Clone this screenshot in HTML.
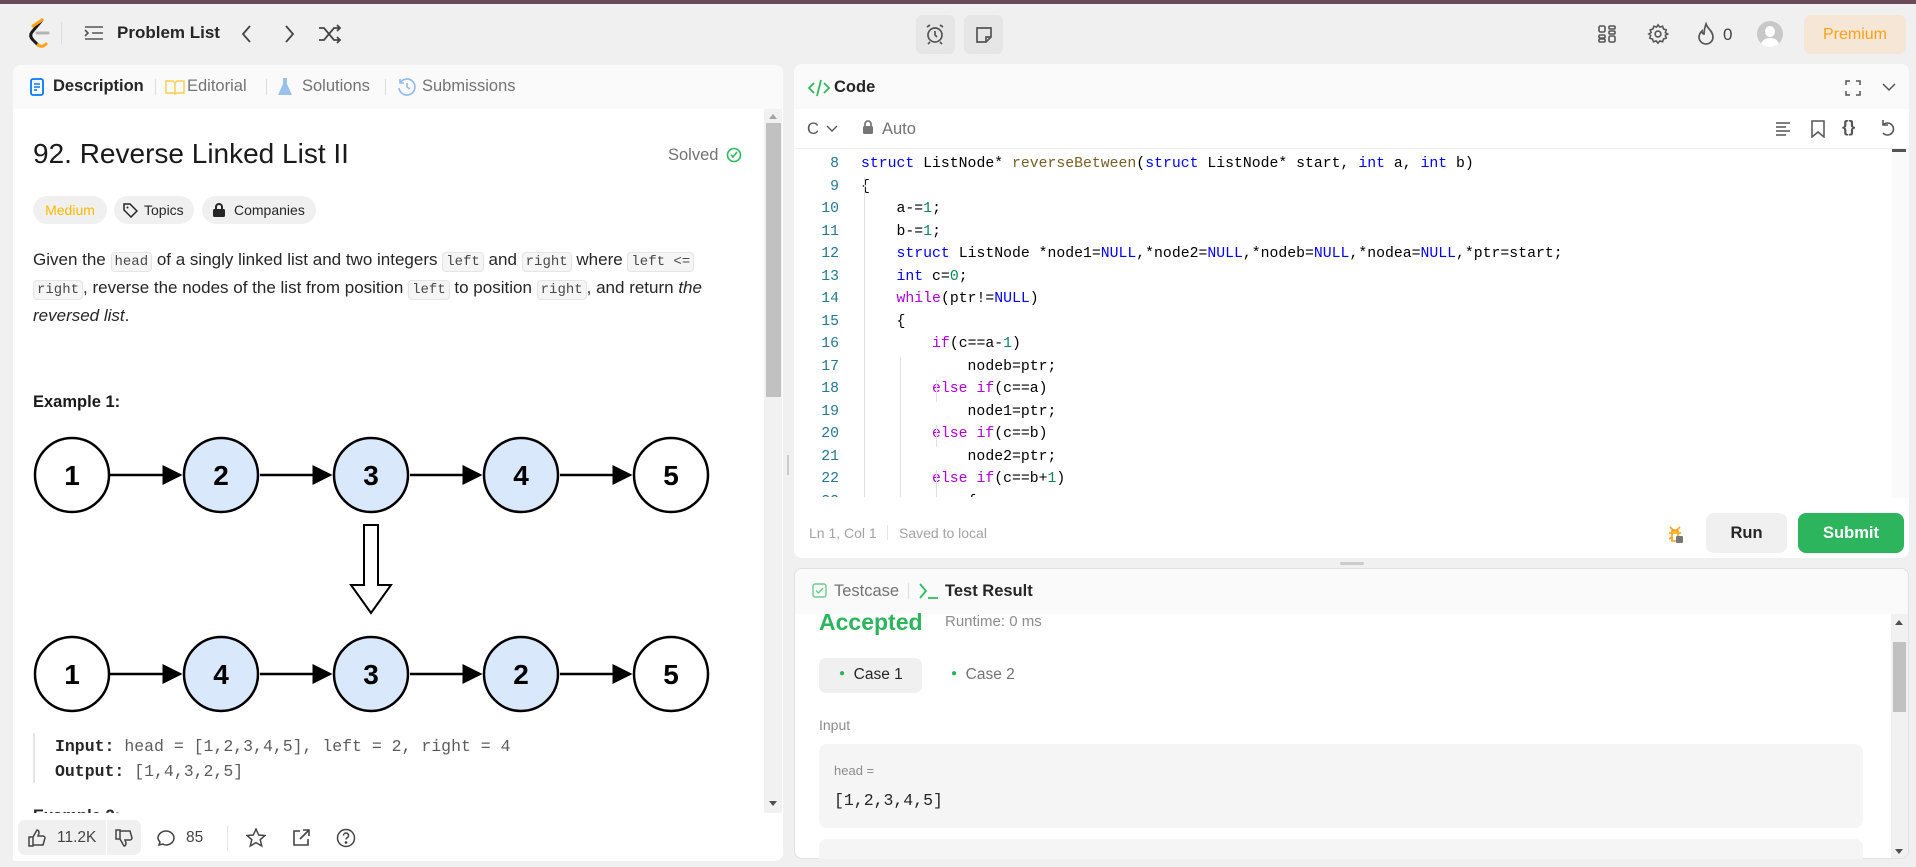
<!DOCTYPE html>
<html><head><meta charset="utf-8"><style>
*{box-sizing:border-box;margin:0;padding:0}
body{width:1916px;height:867px;background:#f0f0f0;font-family:"Liberation Sans",sans-serif;position:relative;overflow:hidden;color:#262626}
.a{position:absolute}
.topbar{left:0;top:0;width:1916px;height:4px;background:#6b4a5a}
.panel{background:#fff;border-radius:8px;overflow:hidden}
.mono{font-family:"Liberation Mono",monospace}
code.i{font-family:"Liberation Mono",monospace;font-size:14px;background:#f5f5f5;border:1px solid #e5e5e5;border-radius:4px;padding:1px 3px;color:#4a4a4a}
.code div{height:22.5px;line-height:22.5px;white-space:pre}
.k{color:#0000ff}.f{color:#795e26}.c{color:#af00db}.n{color:#098658}
.ln{color:#237893;text-align:right;width:40px;display:inline-block;margin-right:22px}
.tab{font-size:16.5px;color:#737373;top:77px}
</style></head><body>
<div class="a topbar"></div>
<!-- nav -->
<svg class="a" style="left:28px;top:18px" width="24" height="30" viewBox="0 0 24 30"><path d="M14 2 L4 14 Q1 18 5 22 L10 27" stroke="#1a1a1a" stroke-width="3" fill="none" stroke-linecap="round"/><path d="M10 27 Q14 30 18 26" stroke="#ffa116" stroke-width="3" fill="none" stroke-linecap="round"/><path d="M9 15 H20" stroke="#b3b3b3" stroke-width="3" stroke-linecap="round"/><path d="M5 8 L14 2" stroke="#ffa116" stroke-width="3" stroke-linecap="round"/></svg>
<div class="a" style="left:61px;top:22px;width:1px;height:22px;background:#ddd"></div>
<svg class="a" style="left:84px;top:25px" width="20" height="16" viewBox="0 0 20 16" stroke="#555" stroke-width="1.6" fill="none"><path d="M1 2h18M8 8h11M1 14h18M1 5l3 3-3 3"/></svg>
<div class="a" style="left:117px;top:23px;font-size:17px;font-weight:600;color:#262626">Problem List</div>
<svg class="a" style="left:240px;top:24px" width="14" height="20"><path d="M10 2 L3 10 L10 18" stroke="#444" stroke-width="1.8" fill="none"/></svg>
<svg class="a" style="left:282px;top:24px" width="14" height="20"><path d="M4 2 L11 10 L4 18" stroke="#444" stroke-width="1.8" fill="none"/></svg>
<svg class="a" style="left:318px;top:24px" width="24" height="20" viewBox="0 0 24 20" stroke="#444" stroke-width="1.8" fill="none"><path d="M1 4h5l10 12h6M1 16h5l10-12h6M19 1l3 3-3 3M19 13l3 3-3 3"/></svg>
<div class="a" style="left:916px;top:15px;width:39px;height:39px;background:#e6e6e6;border-radius:6px"></div>
<svg class="a" style="left:924px;top:23px" width="22" height="22" viewBox="0 0 22 22" stroke="#555" stroke-width="1.7" fill="none"><circle cx="11" cy="12" r="7"/><path d="M11 8v4l2 2M3 4l3-2M19 4l-3-2M6 19l-2 2M16 19l2 2"/></svg>
<div class="a" style="left:964px;top:15px;width:39px;height:39px;background:#e6e6e6;border-radius:6px"></div>
<svg class="a" style="left:974px;top:25px" width="20" height="20" viewBox="0 0 20 20" stroke="#555" stroke-width="1.7" fill="none"><path d="M3 3h14v9l-5 5H3z M12 17v-5h5"/></svg>
<svg class="a" style="left:1597px;top:24px" width="20" height="20" viewBox="0 0 20 20" stroke="#555" stroke-width="1.6" fill="none"><rect x="2" y="2" width="6" height="6" rx="1.5"/><rect x="2" y="11" width="6" height="3" rx="1"/><rect x="2" y="15" width="6" height="3" rx="1"/><rect x="12" y="2" width="6" height="3" rx="1"/><rect x="12" y="7" width="6" height="3" rx="1"/><rect x="12" y="12" width="6" height="6" rx="1.5"/></svg>
<svg class="a" style="left:1647px;top:23px" width="22" height="22" viewBox="0 0 24 24" stroke="#555" stroke-width="1.7" fill="none"><circle cx="12" cy="12" r="3.2"/><path d="M12 2l2 2.5 3-1 1 3 3 1-1 3 2.5 1.5-2.5 1.5 1 3-3 1-1 3-3-1-2 2.5-2-2.5-3 1-1-3-3-1 1-3L2 12l2.5-1.5-1-3 3-1 1-3 3 1z"/></svg>
<svg class="a" style="left:1696px;top:22px" width="20" height="24" viewBox="0 0 20 24" stroke="#555" stroke-width="1.7" fill="none"><path d="M10 2c1 4 7 7 7 13a7 7 0 0 1-14 0c0-3 2-5 3-6 0 2 1 3 2 3 0-4 1-7 2-10z"/></svg>
<div class="a" style="left:1723px;top:25px;font-size:17px;color:#444">0</div>
<div class="a" style="left:1757px;top:21px;width:26px;height:26px;border-radius:50%;background:#c8c8c8;overflow:hidden"><div class="a" style="left:8px;top:5px;width:10px;height:11px;border-radius:50%;background:#fff"></div><div class="a" style="left:4px;top:17px;width:18px;height:14px;border-radius:50%;background:#fff"></div></div>
<div class="a" style="left:1804px;top:15px;width:102px;height:39px;background:#f5e6d5;border-radius:7px;color:#ffa116;font-size:16px;text-align:center;line-height:39px">Premium</div>

<!-- left panel -->
<div class="a panel" style="left:13px;top:65px;width:770px;height:796px">
 <div class="a" style="left:0;top:0;width:770px;height:44px;background:#fafafa"></div>
 <div class="a" style="left:751px;top:44px;width:18px;height:704px;background:#f1f1f1"></div>
 <div class="a" style="left:753px;top:58px;width:15px;height:274px;background:#c1c1c1"></div>
 <div class="a" style="left:756px;top:49px;border:4px solid transparent;border-bottom:5px solid #a3a3a3;border-top:0"></div>
 <div class="a" style="left:756px;top:736px;border:4px solid transparent;border-top:5px solid #505050;border-bottom:0"></div>
</div>
<svg class="a" style="left:30px;top:78px" width="14" height="18" viewBox="0 0 14 18"><rect x="1" y="1" width="12" height="16" rx="2" fill="none" stroke="#007bff" stroke-width="1.8"/><path d="M4 6h6M4 9h6M4 12h3" stroke="#007bff" stroke-width="1.6"/></svg>
<div class="a tab" style="left:53px;color:#262626;font-weight:600">Description</div>
<div class="a" style="left:155px;top:79px;width:1px;height:16px;background:#ddd"></div>
<svg class="a" style="left:165px;top:79px" width="20" height="16"><path d="M1 2h7l2 2 2-2h7v12h-7l-2 1-2-1H1z M10 4v11" stroke="#ffb800" stroke-width="1.4" fill="none" opacity=".7"/></svg>
<div class="a tab" style="left:187px">Editorial</div>
<div class="a" style="left:266px;top:79px;width:1px;height:16px;background:#ddd"></div>
<svg class="a" style="left:277px;top:77px" width="16" height="20"><path d="M5 1h6M6 1v6L1 18h14L10 7V1" fill="#4a90e2" opacity=".55"/></svg>
<div class="a tab" style="left:302px">Solutions</div>
<div class="a" style="left:385px;top:79px;width:1px;height:16px;background:#ddd"></div>
<svg class="a" style="left:397px;top:77px" width="20" height="20" viewBox="0 0 20 20"><path d="M3 6a8 8 0 1 1-1 5M3 2v4h4M10 6v4l3 2" stroke="#4a90e2" stroke-width="1.6" fill="none" opacity=".6"/></svg>
<div class="a tab" style="left:422px">Submissions</div>

<div class="a" style="left:33px;top:138px;font-size:28px;font-weight:500;color:#1a1a1a">92. Reverse Linked List II</div>
<div class="a" style="left:668px;top:146px;font-size:16.5px;color:#737373">Solved</div>
<svg class="a" style="left:726px;top:146px" width="16" height="18"><circle cx="8" cy="9" r="6.5" stroke="#2cbb5d" stroke-width="1.6" fill="none"/><path d="M5 9l2 2 4-5" stroke="#2cbb5d" stroke-width="1.6" fill="none"/></svg>
<div class="a" style="left:33px;top:196px;width:74px;height:28px;border-radius:14px;background:#f0f0f0;color:#ffb800;font-size:14px;line-height:28px;text-align:center">Medium</div>
<div class="a" style="left:114px;top:196px;width:80px;height:28px;border-radius:14px;background:#f0f0f0;font-size:14px;line-height:28px;padding-left:30px">Topics</div>
<svg class="a" style="left:122px;top:202px" width="16" height="16"><path d="M2 2h6l7 7-6 6-7-7z" stroke="#262626" stroke-width="1.5" fill="none"/><circle cx="5.5" cy="5.5" r="1" fill="#262626"/></svg>
<div class="a" style="left:202px;top:196px;width:114px;height:28px;border-radius:14px;background:#f0f0f0;font-size:14px;line-height:28px;padding-left:32px">Companies</div>
<svg class="a" style="left:212px;top:202px" width="14" height="16"><rect x="1" y="7" width="12" height="8" rx="1.5" fill="#262626"/><path d="M4 7V5a3 3 0 0 1 6 0v2" stroke="#262626" stroke-width="2" fill="none"/></svg>
<div class="a" style="left:33px;top:247px;width:710px;font-size:17px;line-height:25px;color:#262626">Given the <code class="i">head</code> of a singly linked list and two integers <code class="i">left</code> and <code class="i">right</code> where <code class="i">left &lt;=</code> <code class="i">right</code>, reverse the nodes of the list from position <code class="i">left</code> to position <code class="i">right</code>, and return <i>the reversed list</i>.</div>
<div class="a" style="left:33px;top:393px;font-size:16.5px;font-weight:700;color:#1a1a1a">Example 1:</div>
<svg class="a" style="left:25px;top:430px" width="700" height="290" viewBox="25 430 700 290" font-family="Liberation Sans" font-weight="700" font-size="28" text-anchor="middle">
 <defs><marker id="ar" markerWidth="8" markerHeight="8" refX="7" refY="4" orient="auto"><path d="M0 0L8 4L0 8z" fill="#000"/></marker></defs>
 <g stroke="#000" stroke-width="2.5">
 <line x1="110" y1="475" x2="180" y2="475" marker-end="url(#ar)"/><line x1="260" y1="475" x2="330" y2="475" marker-end="url(#ar)"/><line x1="410" y1="475" x2="480" y2="475" marker-end="url(#ar)"/><line x1="560" y1="475" x2="630" y2="475" marker-end="url(#ar)"/>
 <line x1="110" y1="674" x2="180" y2="674" marker-end="url(#ar)"/><line x1="260" y1="674" x2="330" y2="674" marker-end="url(#ar)"/><line x1="410" y1="674" x2="480" y2="674" marker-end="url(#ar)"/><line x1="560" y1="674" x2="630" y2="674" marker-end="url(#ar)"/>
 <circle cx="72" cy="475" r="37" fill="#fff"/><circle cx="221" cy="475" r="37" fill="#dae8fc"/><circle cx="371" cy="475" r="37" fill="#dae8fc"/><circle cx="521" cy="475" r="37" fill="#dae8fc"/><circle cx="671" cy="475" r="37" fill="#fff"/>
 <circle cx="72" cy="674" r="37" fill="#fff"/><circle cx="221" cy="674" r="37" fill="#dae8fc"/><circle cx="371" cy="674" r="37" fill="#dae8fc"/><circle cx="521" cy="674" r="37" fill="#dae8fc"/><circle cx="671" cy="674" r="37" fill="#fff"/>
 <path d="M364 525h14v60h13l-20 28-20-28h13z" fill="#fff" stroke-width="2"/>
 </g>
 <g fill="#000"><text x="72" y="485">1</text><text x="221" y="485">2</text><text x="371" y="485">3</text><text x="521" y="485">4</text><text x="671" y="485">5</text>
 <text x="72" y="684">1</text><text x="221" y="684">4</text><text x="371" y="684">3</text><text x="521" y="684">2</text><text x="671" y="684">5</text></g>
</svg>
<div class="a" style="left:33px;top:733px;width:2px;height:50px;background:#e5e5e5"></div>
<div class="a mono" style="left:55px;top:734px;font-size:16.5px;line-height:25px;color:#5c5c5c;white-space:pre"><b style="color:#262626">Input:</b> head = [1,2,3,4,5], left = 2, right = 4
<b style="color:#262626">Output:</b> [1,4,3,2,5]</div>
<div class="a" style="left:33px;top:806px;font-size:16.5px;font-weight:700;height:7px;overflow:hidden;line-height:20px">Example 2:</div>
<div class="a" style="left:13px;top:813px;width:750px;height:48px;background:#fff"></div>
<div class="a" style="left:18px;top:820px;width:123px;height:35px;background:#f0f0f0;border-radius:7px"></div>
<div class="a" style="left:106px;top:820px;width:1px;height:35px;background:#fff"></div>
<svg class="a" style="left:28px;top:829px" width="18" height="18" viewBox="0 0 18 18" stroke="#444" stroke-width="1.5" fill="none"><path d="M1 8h4v9H1zM5 8l4-7c2 0 2 2 2 3l-1 3h5c1 0 2 1 2 2l-2 7H5"/></svg>
<div class="a" style="left:57px;top:829px;font-size:15.5px;color:#444">11.2K</div>
<svg class="a" style="left:115px;top:829px" width="18" height="18" viewBox="0 0 18 18" stroke="#444" stroke-width="1.5" fill="none"><path d="M1 1h4v9H1zM5 10l4 7c2 0 2-2 2-3l-1-3h5c1 0 2-1 2-2l-2-7H5"/></svg>
<svg class="a" style="left:157px;top:829px" width="19" height="18" viewBox="0 0 19 18" stroke="#444" stroke-width="1.5" fill="none"><path d="M9 2c4 0 8 3 8 7s-4 7-8 7c-1 0-2 0-3-1l-4 1 1-3C2 12 1 10 1 9c0-4 4-7 8-7z"/></svg>
<div class="a" style="left:186px;top:829px;font-size:15.5px;color:#444">85</div>
<div class="a" style="left:227px;top:826px;width:1px;height:24px;background:#e5e5e5"></div>
<svg class="a" style="left:246px;top:828px" width="20" height="20" viewBox="0 0 20 20"><path d="M10 1l2.7 6 6.3.5-4.8 4.2 1.5 6.3L10 14.6 4.3 18l1.5-6.3L1 7.5 7.3 7z" stroke="#444" stroke-width="1.5" fill="none"/></svg>
<svg class="a" style="left:291px;top:828px" width="20" height="20" viewBox="0 0 20 20" stroke="#444" stroke-width="1.6" fill="none"><path d="M9 3H3v14h14v-6M12 2h6v6M18 2l-9 9"/></svg>
<svg class="a" style="left:336px;top:828px" width="20" height="20" viewBox="0 0 20 20" stroke="#444" stroke-width="1.5" fill="none"><circle cx="10" cy="10" r="8.5"/><path d="M7.5 7.5a2.5 2.5 0 1 1 3.5 2.3c-.7.4-1 .9-1 1.7"/><circle cx="10" cy="14.5" r=".6" fill="#444"/></svg>
<div class="a" style="left:787px;top:455px;width:2px;height:20px;background:#ccc"></div>

<!-- code panel -->
<div class="a panel" style="left:794px;top:64px;width:1115px;height:494px">
 <div class="a" style="left:0;top:0;width:1115px;height:45px;background:#fafafa"></div>
 <div class="a" style="left:0;top:84px;width:1115px;height:1px;background:#eee"></div>
 <div class="a" style="left:1098px;top:85px;width:17px;height:349px;background:#fafafa"></div>
 <div class="a" style="left:1098px;top:85px;width:14px;height:3px;background:#555"></div>
</div>
<svg class="a" style="left:808px;top:78px" width="22" height="20" viewBox="0 0 22 20" stroke="#2cbb5d" stroke-width="1.8" fill="none"><path d="M6 5L1 10l5 5M16 5l5 5-5 5M13 2L9 18"/></svg>
<div class="a" style="left:834px;top:78px;font-size:16.5px;font-weight:600;color:#262626">Code</div>
<svg class="a" style="left:1845px;top:80px" width="16" height="16" stroke="#555" stroke-width="1.5" fill="none"><path d="M1 5V1h4M11 1h4v4M15 11v4h-4M5 15H1v-4"/></svg>
<svg class="a" style="left:1882px;top:82px" width="14" height="10" stroke="#555" stroke-width="1.5" fill="none"><path d="M1 2l6 6 6-6"/></svg>
<div class="a" style="left:807px;top:120px;font-size:16.5px;color:#555">C</div>
<svg class="a" style="left:826px;top:125px" width="12" height="8" stroke="#555" stroke-width="1.4" fill="none"><path d="M1 1l5 5 5-5"/></svg>
<svg class="a" style="left:862px;top:120px" width="12" height="15"><rect x="1" y="6" width="10" height="8" rx="1.5" fill="#777"/><path d="M3 6V4a3 3 0 0 1 6 0v2" stroke="#777" stroke-width="1.8" fill="none"/></svg>
<div class="a" style="left:882px;top:120px;font-size:16.5px;color:#737373">Auto</div>
<svg class="a" style="left:1775px;top:121px" width="16" height="16" stroke="#555" stroke-width="1.5"><path d="M1 2h14M1 6h10M1 10h14M1 14h10"/></svg>
<svg class="a" style="left:1811px;top:120px" width="14" height="18" stroke="#555" stroke-width="1.5" fill="none"><path d="M1 1h12v16l-6-5-6 5z"/></svg>
<div class="a" style="left:1842px;top:117px;font-size:17px;color:#555;font-weight:600">{}</div>
<svg class="a" style="left:1879px;top:119px" width="16" height="18" stroke="#555" stroke-width="1.6" fill="none"><path d="M4 6a6 6 0 1 1 0 8M4 1v5h5"/></svg>
<div class="a mono code" style="left:799px;top:153px;font-size:14.8px;color:#000;width:1090px;height:344px;overflow:hidden">
<div><span class="ln">8</span><span class="k">struct</span> ListNode* <span class="f">reverseBetween</span>(<span class="k">struct</span> ListNode* start, <span class="k">int</span> a, <span class="k">int</span> b)</div>
<div><span class="ln">9</span>{</div>
<div><span class="ln">10</span>    a-=<span class="n">1</span>;</div>
<div><span class="ln">11</span>    b-=<span class="n">1</span>;</div>
<div><span class="ln">12</span>    <span class="k">struct</span> ListNode *node1=<span class="k">NULL</span>,*node2=<span class="k">NULL</span>,*nodeb=<span class="k">NULL</span>,*nodea=<span class="k">NULL</span>,*ptr=start;</div>
<div><span class="ln">13</span>    <span class="k">int</span> c=<span class="n">0</span>;</div>
<div><span class="ln">14</span>    <span class="c">while</span>(ptr!=<span class="k">NULL</span>)</div>
<div><span class="ln">15</span>    {</div>
<div><span class="ln">16</span>        <span class="c">if</span>(c==a-<span class="n">1</span>)</div>
<div><span class="ln">17</span>            nodeb=ptr;</div>
<div><span class="ln">18</span>        <span class="c">else if</span>(c==a)</div>
<div><span class="ln">19</span>            node1=ptr;</div>
<div><span class="ln">20</span>        <span class="c">else if</span>(c==b)</div>
<div><span class="ln">21</span>            node2=ptr;</div>
<div><span class="ln">22</span>        <span class="c">else if</span>(c==b+<span class="n">1</span>)</div>
<div><span class="ln">23</span>            {</div>
</div>
<div class="a" style="left:864px;top:177px;width:1px;height:320px;background:#e0e0e0"></div>
<div class="a" style="left:900px;top:357px;width:1px;height:140px;background:#e0e0e0"></div>
<div class="a" style="left:936px;top:380px;width:1px;height:22px;background:#e0e0e0"></div>
<div class="a" style="left:936px;top:425px;width:1px;height:22px;background:#e0e0e0"></div>
<div class="a" style="left:936px;top:470px;width:1px;height:27px;background:#e0e0e0"></div>
<div class="a" style="left:809px;top:525px;font-size:14px;color:#a3a3a3">Ln 1, Col 1</div>
<div class="a" style="left:887px;top:525px;width:1px;height:15px;background:#e5e5e5"></div>
<div class="a" style="left:899px;top:525px;font-size:14px;color:#a3a3a3">Saved to local</div>
<svg class="a" style="left:1665px;top:523px" width="20" height="22"><path d="M5 4l3 3h4l3-3M4 10h12M4 16l3-2M16 16l-3-2M7 8h6v10H7z" stroke="#ffa116" stroke-width="1.6" fill="none"/><rect x="11" y="13" width="7" height="7" rx="1" fill="#777"/></svg>
<div class="a" style="left:1706px;top:513px;width:81px;height:40px;background:#f0f0f0;border-radius:8px;font-size:16.5px;font-weight:600;text-align:center;line-height:40px">Run</div>
<div class="a" style="left:1798px;top:513px;width:106px;height:40px;background:#2cb55d;border-radius:8px;font-size:16.5px;font-weight:700;color:#fff;text-align:center;line-height:40px">Submit</div>
<div class="a" style="left:1340px;top:562px;width:24px;height:3px;background:#ccc;border-radius:2px"></div>

<!-- result panel -->
<div class="a panel" style="left:794px;top:568px;width:1115px;height:291px;border:1px solid #e0e0e0">
 <div class="a" style="left:0;top:0;width:1115px;height:45px;background:#fafafa"></div>
 <div class="a" style="left:1096px;top:45px;width:17px;height:246px;background:#f1f1f1"></div>
 <div class="a" style="left:1098px;top:73px;width:13px;height:70px;background:#c1c1c1"></div>
 <div class="a" style="left:1100px;top:51px;border:4px solid transparent;border-bottom:5px solid #505050;border-top:0"></div>
 <div class="a" style="left:1100px;top:280px;border:4px solid transparent;border-top:5px solid #505050;border-bottom:0"></div>
</div>
<svg class="a" style="left:812px;top:583px" width="15" height="15"><rect x="1" y="1" width="13" height="13" rx="2" stroke="#2cbb5d" stroke-width="1.4" fill="none" opacity=".7"/><path d="M4 7.5l2.5 2.5 4.5-5" stroke="#2cbb5d" stroke-width="1.4" fill="none" opacity=".7"/></svg>
<div class="a" style="left:834px;top:582px;font-size:16.5px;color:#737373">Testcase</div>
<div class="a" style="left:908px;top:583px;width:1px;height:16px;background:#ddd"></div>
<svg class="a" style="left:918px;top:582px" width="22" height="18" stroke="#2cbb5d" stroke-width="1.8" fill="none"><path d="M2 2l6 7-6 7M10 16h10"/></svg>
<div class="a" style="left:945px;top:582px;font-size:16.5px;font-weight:600;color:#262626">Test Result</div>
<div class="a" style="left:819px;top:609px;font-size:23px;font-weight:600;color:#2cb55d">Accepted</div>
<div class="a" style="left:945px;top:613px;font-size:15px;color:#8c8c8c">Runtime: 0 ms</div>
<div class="a" style="left:819px;top:658px;width:103px;height:35px;background:#f0f0f0;border-radius:7px"></div>
<div class="a" style="left:839px;top:666px;font-size:15.5px;color:#262626;font-weight:500"><span style="color:#2cb55d;font-size:10px;vertical-align:3px">●</span>&nbsp; Case 1</div>
<div class="a" style="left:951px;top:666px;font-size:15.5px;color:#737373"><span style="color:#2cb55d;font-size:10px;vertical-align:3px">●</span>&nbsp; Case 2</div>
<div class="a" style="left:819px;top:717px;font-size:14px;color:#8c8c8c;font-weight:500">Input</div>
<div class="a" style="left:819px;top:744px;width:1044px;height:84px;background:#f5f5f5;border-radius:8px"></div>
<div class="a" style="left:834px;top:763px;font-size:13px;color:#8c8c8c">head =</div>
<div class="a mono" style="left:834px;top:791px;font-size:16.5px;color:#262626">[1,2,3,4,5]</div>
<div class="a" style="left:819px;top:839px;width:1044px;height:20px;background:#f5f5f5;border-radius:8px 8px 0 0"></div>
</body></html>
